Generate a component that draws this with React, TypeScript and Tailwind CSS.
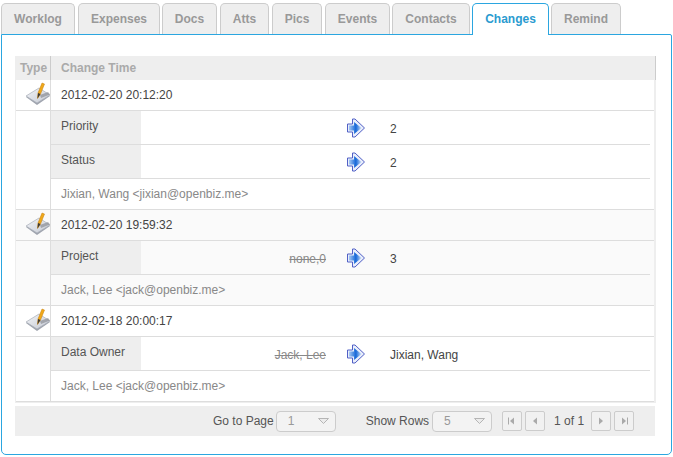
const tabs = [
  ["Worklog", "w-[74px]"],
  ["Expenses", "w-[82px] ml-[3px]"],
  ["Docs", "w-[55px] ml-[2px]"],
  ["Atts", "w-[49px] ml-[3px]"],
  ["Pics", "w-[50px] ml-[3px]"],
  ["Events", "w-[65px] ml-[3px]"],
  ["Contacts", "w-[78px] ml-[2px]"],
  ["Changes", "w-[77px] ml-[2px]"],
  ["Remind", "w-[70px] ml-[2px]"],
];

function NoteIcon() {
  return (
    <svg width="28" height="26" viewBox="0 0 28 26" className="block">
      <defs>
        <linearGradient id="pad" x1="0" y1="0" x2="1" y2="1">
          <stop offset="0" stopColor="#f4f5f8" />
          <stop offset="1" stopColor="#c3c8d2" />
        </linearGradient>
      </defs>
      <path d="M1 15 L14 7 L25 14 L12 23 Z" fill="#9ea3ad" />
      <path d="M1 14 L14 6 L25 13 L12 21 Z" fill="url(#pad)" stroke="#a8adb8" strokeWidth="0.7" />
      <path d="M15 13 L23 10 L25 12.5 L16 16 Z" fill="#8b8f96" opacity="0.7" />
      <path d="M12.5 16.5 L13 11 L17 1 L19.5 2 L15.5 12 Z" fill="#f0a818" stroke="#c47d0a" strokeWidth="0.5" />
      <path d="M12.5 16.5 L13 11 L15.5 12 Z" fill="#3c3a36" />
    </svg>
  );
}

function ArrowIcon() {
  return (
    <svg width="20" height="20" viewBox="0 0 20 20" className="block">
      <defs>
        <linearGradient id="arr" x1="0" y1="0" x2="1" y2="0">
          <stop offset="0" stopColor="#a9cbf4" />
          <stop offset="0.55" stopColor="#1567d8" />
          <stop offset="1" stopColor="#cfe1f8" />
        </linearGradient>
      </defs>
      <path d="M1.5 6 H6.5 V1 H9 L18.5 10 L9 19 H6.5 V14 H1.5 Z" fill="#e9eefb" stroke="#5160c6" strokeWidth="1" strokeLinejoin="round" />
      <path d="M3 7.5 H8 V4 L15.5 10 L8 16 V12.5 H3 Z" fill="url(#arr)" />
    </svg>
  );
}

function Sub({ label, oldV, newV }: { label: string; oldV?: string; newV: string }) {
  return (
    <div className="flex h-[34px] border-b border-[#dddddd] mr-[4px]">
      <div className="w-[90px] bg-[#eeeeee] pl-[10px] pt-[8px] text-[#555555] leading-[14px]">{label}</div>
      <div className="w-[185px] text-right pt-[11px] leading-[14px] text-[#888888] line-through">{oldV}</div>
      <div className="w-[64px] pl-[20px] pt-[7px]"><ArrowIcon /></div>
      <div className="pt-[11px] leading-[14px] text-[#444444]">{newV}</div>
    </div>
  );
}

function Group({ time, shade, subs, author }: {
  time: string;
  shade?: boolean;
  subs: { label: string; oldV?: string; newV: string }[];
  author: string;
}) {
  return (
    <div className={shade ? "bg-[#fafafa]" : "bg-white"}>
      <div className="flex h-[31px] border-b border-[#dddddd]">
        <div className="w-[35px] border-r border-[#dddddd] pl-[9px] pt-[2px]"><NoteIcon /></div>
        <div className="pl-[10px] pt-[8px] leading-[14px] text-[#444444]">{time}</div>
      </div>
      <div className="flex border-b border-[#dddddd]">
        <div className="w-[35px] shrink-0 border-r border-[#dddddd]" />
        <div className="flex-1 min-w-0">
          {subs.map((s) => <Sub key={s.label} {...s} />)}
          <div className="h-[30px] pl-[10px] pt-[8px] leading-[14px] text-[#888888]">{author}</div>
        </div>
      </div>
    </div>
  );
}

function Select({ value }: { value: string }) {
  return (
    <div className="flex items-center justify-between w-[60px] h-[21px] border border-[#cccccc] rounded-[4px] bg-[#f3f3f3] pl-[11px] pr-[5px] text-[#999999]">
      <span>{value}</span>
      <svg width="11" height="6" viewBox="0 0 11 6" className="mr-[1px]"><path d="M0.5 0.5 H10.5 L5.5 5.5 Z" fill="#ececec" stroke="#b5b5b5" /></svg>
    </div>
  );
}

function PageBtn({ dir, end }: { dir: "l" | "r"; end?: boolean }) {
  const tri = dir === "l" ? "M7 1.5 V8.5 L3 5 Z" : "M3 1.5 V8.5 L7 5 Z";
  const bar = dir === "l" ? "M1.5 1.5 V8.5" : "M8.5 1.5 V8.5";
  return (
    <div className="flex items-center justify-center w-[20px] h-[20px] border border-[#cccccc] rounded-[2px] bg-[#f1f1f1]">
      <svg width="10" height="10" viewBox="0 0 10 10">
        <path d={tri} fill="#aaaaaa" />
        {end && <path d={bar} stroke="#aaaaaa" fill="none" />}
      </svg>
    </div>
  );
}

export default function App() {
  return (
    <div className="w-[673px] h-[457px] bg-white pt-[3px] pl-[1px] pr-[1px] text-[12px] font-['Liberation_Sans',Arial,sans-serif]">
      <div className="flex h-[32px] relative z-10">
        {tabs.map(([t, w]) => {
          const active = t === "Changes";
          return (
            <div
              key={t}
              className={`${w} text-center font-bold rounded-t-[5px] border border-b-0 pt-[7px] leading-[16px] ${
                active
                  ? "h-[32px] bg-white border-[#2ba6e0] text-[#2b9bd0]"
                  : "h-[31px] bg-[#eeeeee] border-[#cccccc] text-[#999999]"
              }`}
            >
              {t}
            </div>
          );
        })}
      </div>
      <div className="w-[671px] h-[421px] -mt-[1px] border border-[#2ba6e0] rounded-b-[5px] rounded-tr-[2px] pt-[21px] pl-[13px]">
        <div className="w-[641px] border-l border-r-2 border-b-2 border-[#eeeeee] border-r-[#eeeeee]">
          <div className="flex h-[24px] bg-[#eeeeee] font-bold text-[#aaaaaa] leading-[24px] -ml-[1px] -mr-[2px] border-r border-[#cccccc]">
            <div className="w-[36px] border-r border-[#cccccc] pl-[5px]">Type</div>
            <div className="pl-[10px]">Change Time</div>
          </div>
          <Group
            time="2012-02-20 20:12:20"
            subs={[
              { label: "Priority", newV: "2" },
              { label: "Status", newV: "2" },
            ]}
            author="Jixian, Wang <jixian@openbiz.me>"
          />
          <Group
            time="2012-02-20 19:59:32"
            shade
            subs={[{ label: "Project", oldV: "none,0", newV: "3" }]}
            author="Jack, Lee <jack@openbiz.me>"
          />
          <div className="-mb-[1px]">
            <Group
              time="2012-02-18 20:00:17"
              subs={[{ label: "Data Owner", oldV: "Jack, Lee", newV: "Jixian, Wang" }]}
              author="Jack, Lee <jack@openbiz.me>"
            />
          </div>
        </div>
        <div className="flex items-center w-[640px] h-[30px] mt-[3px] bg-[#eeeeee] text-[#555555] pl-[198px]">
          <span className="mr-[2px] whitespace-nowrap">Go to Page</span>
          <Select value="1" />
          <span className="ml-[30px] mr-[3px] whitespace-nowrap">Show Rows</span>
          <Select value="5" />
          <div className="flex items-center ml-[10px] gap-[3px] -mt-[1px]">
            <PageBtn dir="l" end />
            <PageBtn dir="l" />
            <span className="ml-[6px] mr-[5px] w-[29px] whitespace-nowrap text-[#555555]">1 of 1</span>
            <PageBtn dir="r" />
            <PageBtn dir="r" end />
          </div>
        </div>
      </div>
    </div>
  );
}
